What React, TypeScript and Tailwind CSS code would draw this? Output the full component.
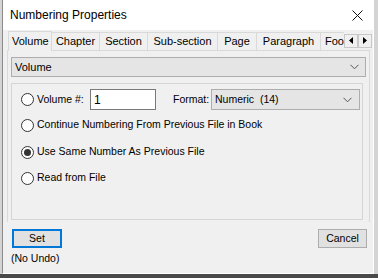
import React from "react";

const tabs = [
  { label: "Chapter", w: "w-[48px]" },
  { label: "Section", w: "w-[48px]" },
  { label: "Sub-section", w: "w-[70px]" },
  { label: "Page", w: "w-[39px]" },
  { label: "Paragraph", w: "w-[64px]" },
];

function Radio({ checked, label }: { checked?: boolean; label: string }) {
  return (
    <div className="flex items-center gap-[3px] whitespace-nowrap">
      <span className="w-[13px] h-[13px] shrink-0 rounded-full border border-[#333] bg-white flex items-center justify-center">
        {checked && <span className="w-[7px] h-[7px] rounded-full bg-[#333]" />}
      </span>
      <span>{label}</span>
    </div>
  );
}

function Chevron() {
  return (
    <svg width="9" height="6" viewBox="0 0 9 6" fill="none">
      <path d="M0.5 0.8 L4.5 4.8 L8.5 0.8" stroke="#555" strokeWidth="1" />
    </svg>
  );
}

export default function App() {
  return (
    <div className="w-[378px] h-[278px] bg-[#d4d4d4] overflow-hidden flex flex-col">
      <div
        className="ml-[2px] w-[372px] h-[274px] shrink-0 bg-[#f0f0f0] border-l border-l-[#8a8a8a] border-r border-b border-white flex flex-col text-[10.5px] text-black"
        style={{ fontFamily: '"Liberation Sans", Arial, sans-serif' }}
      >
        <div className="h-[30px] bg-white flex items-center justify-between pl-[7px] pr-[10px]">
          <span className="text-[12px]">Numbering Properties</span>
          <svg width="11" height="11" viewBox="0 0 11 11">
            <path d="M0.5 0.5 L10.5 10.5 M10.5 0.5 L0.5 10.5" stroke="#111" strokeWidth="1" />
          </svg>
        </div>

        <div className="h-[20px] flex items-end pl-[5px] text-[11px]">
          <div className="w-[44px] h-[20px] -mb-px bg-[#f0f0f0] border-x border-t border-[#d9d9d9] flex items-center pl-[3px] relative z-10">
            Volume
          </div>
          {tabs.map((t) => (
            <div
              key={t.label}
              className={`${t.w} h-[18px] border-t border-r border-[#d9d9d9] flex items-center justify-center`}
            >
              {t.label}
            </div>
          ))}
          <div className="w-[23px] h-[18px] border-t border-[#d9d9d9] pl-[4px] flex items-center">
            Foo
          </div>
          <div className="flex self-center mt-[1px]">
            <div className="w-[14px] h-[14px] bg-[#f0f0f0] border border-[#c8c8c8] flex items-center justify-center">
              <svg width="4" height="7" viewBox="0 0 4 7">
                <path d="M4 0 L0 3.5 L4 7 Z" fill="#000" />
              </svg>
            </div>
            <div className="w-[14px] h-[14px] bg-[#f0f0f0] border border-[#c8c8c8] flex items-center justify-center">
              <svg width="4" height="7" viewBox="0 0 4 7">
                <path d="M0 0 L4 3.5 L0 7 Z" fill="#000" />
              </svg>
            </div>
          </div>
        </div>

        <div className="ml-[4px] w-[363px] h-[172px] border-x border-t border-[#d9d9d9] flex flex-col pt-[6px] px-[3px]">
          <div className="h-[20px] bg-[#e5e5e5] border border-[#adadad] flex items-center justify-between pl-[3px] pr-[6px]">
            <span className="text-[11px]">Volume</span>
            <Chevron />
          </div>
          <div className="mt-[6px] w-[352px] h-[137px] border border-[#d5d5d5] flex flex-col pt-[5px] pl-[9px]">
            <div className="flex items-center h-[21px]">
              <div className="w-[69px] shrink-0">
                <Radio label="Volume #:" />
              </div>
              <div className="w-[66px] h-[21px] shrink-0 bg-white border border-[#7a7a7a] flex items-center pl-[3px] text-[12px]">
                1
              </div>
              <span className="ml-[17px] w-[38px] shrink-0">Format:</span>
              <div className="w-[149px] h-[21px] shrink-0 bg-[#e5e5e5] border border-[#adadad] flex items-center justify-between pl-[3px] pr-[7px]">
                <span className="whitespace-pre">Numeric  (14)</span>
                <Chevron />
              </div>
            </div>
            <div className="mt-[8px] h-[14px] flex items-center">
              <Radio label="Continue Numbering From Previous File in Book" />
            </div>
            <div className="mt-[13px] h-[14px] flex items-center">
              <Radio checked label="Use Same Number As Previous File" />
            </div>
            <div className="mt-[12px] h-[14px] flex items-center">
              <Radio label="Read from File" />
            </div>
          </div>
        </div>

        <div className="flex justify-between items-start mt-[7px] pl-[9px] pr-[6px]">
          <div className="flex flex-col">
            <div className="w-[50px] h-[19px] bg-[#e1e1e1] border-2 border-[#0078d7] flex items-center justify-center">
              Set
            </div>
            <span className="mt-[3px] -ml-[1px]">(No Undo)</span>
          </div>
          <div className="w-[49px] h-[19px] bg-[#e1e1e1] border border-[#adadad] flex items-center justify-center">
            Cancel
          </div>
        </div>
      </div>
      <div className="h-[4px] bg-[#4a4a4a]" />
    </div>
  );
}
